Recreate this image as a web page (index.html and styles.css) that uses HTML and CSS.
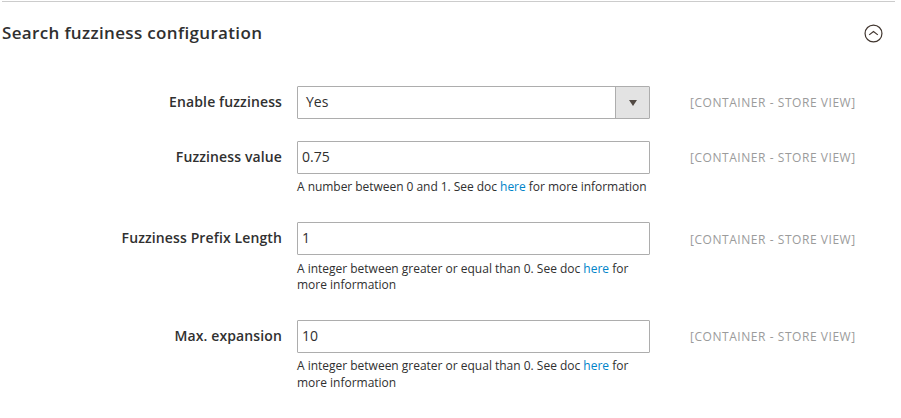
FILE: index.html
```html
<!DOCTYPE html>
<html lang="en">
<head>
<meta charset="utf-8">
<title>Search fuzziness configuration</title>
<link rel="stylesheet" href="styles.css">
</head>
<body>
<section class="config">
  <header class="head">
    <h2>Search fuzziness configuration</h2>
    <svg class="toggle" viewBox="0 0 18 18"><circle cx="9" cy="9" r="8"/><path d="M4.9 10.3 9 7.2l4.1 3.1"/></svg>
  </header>
  <div class="row r1">
    <label>Enable fuzziness</label>
    <div class="value"><div class="field select"><span>Yes</span><i class="arrow"></i></div></div>
    <div class="scope">[CONTAINER - STORE VIEW]</div>
  </div>
  <div class="row r2">
    <label>Fuzziness value</label>
    <div class="value"><div class="field">0.75</div><p>A number between 0 and 1. See doc <a>here</a> for more information</p></div>
    <div class="scope">[CONTAINER - STORE VIEW]</div>
  </div>
  <div class="row r3">
    <label>Fuzziness Prefix Length</label>
    <div class="value"><div class="field">1</div><p>A integer between greater or equal than 0. See doc <a>here</a> for<br>more information</p></div>
    <div class="scope">[CONTAINER - STORE VIEW]</div>
  </div>
  <div class="row r4">
    <label>Max. expansion</label>
    <div class="value"><div class="field">10</div><p>A integer between greater or equal than 0. See doc <a>here</a> for<br>more information</p></div>
    <div class="scope">[CONTAINER - STORE VIEW]</div>
  </div>
</section>
</body>
</html>
```
FILE: styles.css
```css
* { box-sizing: border-box; }
body { margin: 0; background: #fff; color: #303030; font: 14px/19px "Open Sans", sans-serif; overflow: hidden; }
.config { width: 893px; margin-left: 2px; padding-top: 1px; }
.head { display: flex; justify-content: space-between; height: 85px; border-top: 1px solid #ccc; padding: 19px 12px 0 0; }
h2 { margin: 0; font-size: 17px; line-height: 23px; font-weight: 600; letter-spacing: .34px; }
.toggle { width: 19px; height: 19px; margin-top: 3px; fill: none; stroke: #41362f; stroke-width: 1.15; }
.row { display: grid; grid-template-columns: 281px 353px 1fr; column-gap: 15px; margin-left: -1px; }
.r1 { height: 55px; }
.r2 { height: 81px; }
.r3 { height: 98px; }
label { font-weight: 600; text-align: right; padding-top: 6px; letter-spacing: .12px; }
.field { height: 33px; border: 1px solid #adadad; padding: 5px 4px; border-radius: 1px; }
.select { display: flex; justify-content: space-between; padding: 0 0 0 8px; line-height: 30px; }
.arrow { display: flex; width: 34px; border-left: 1px solid #adadad; background: #e3e3e3; align-items: center; justify-content: center; }
.arrow::after { content: ""; margin-top: 1px; border: 4px solid transparent; border-top: 6px solid #514943; border-bottom: 0; }
p { margin: 5px 0 0; font-size: 12px; line-height: 16px; white-space: nowrap; }
.r2 p { letter-spacing: -.04px; }
.r3 p { margin-top: 6px; letter-spacing: -.01px; }
.r4 p { margin-top: 4px; line-height: 17px; letter-spacing: -.01px; }
a { color: #0084c9; }
.scope { font-size: 12px; line-height: 16px; color: #9b9b9b; padding: 9px 0 0 25px; letter-spacing: .55px; white-space: nowrap; }
.r3 .scope { padding-top: 10px; }
```
